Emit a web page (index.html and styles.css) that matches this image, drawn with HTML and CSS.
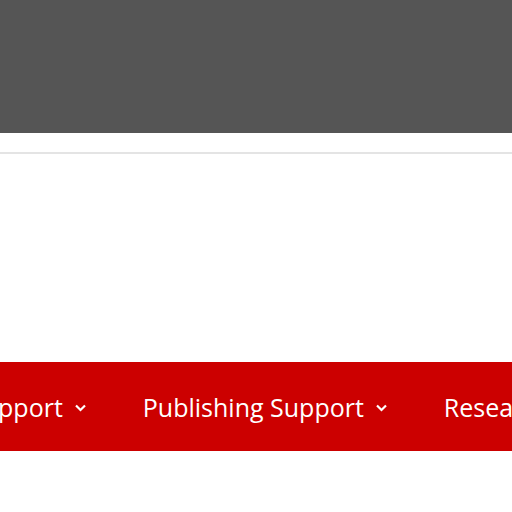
FILE: index.html
```html
<!DOCTYPE html>
<html>
<head>
<meta charset="utf-8">
<link rel="stylesheet" href="styles.css">
</head>
<body>
<div class="topbar"></div>
<div class="header">
  <div class="rule"></div>
</div>
<nav class="mainnav">
  <ul class="menu">
    <li class="item">Support <svg class="chev" viewBox="0 0 13 8" width="13" height="8"><path d="M2 1.5 L6.5 6 L11 1.5" fill="none" stroke="#fff" stroke-width="2.2"/></svg></li>
    <li class="item">Publishing Support <svg class="chev" viewBox="0 0 13 8" width="13" height="8"><path d="M2 1.5 L6.5 6 L11 1.5" fill="none" stroke="#fff" stroke-width="2.2"/></svg></li>
    <li class="item">Research Support <svg class="chev" viewBox="0 0 13 8" width="13" height="8"><path d="M2 1.5 L6.5 6 L11 1.5" fill="none" stroke="#fff" stroke-width="2.2"/></svg></li>
  </ul>
</nav>
</body>
</html>
```
FILE: styles.css
```css
html, body {
  margin: 0;
  padding: 0;
  background: #ffffff;
  overflow: hidden;
  width: 512px;
  height: 512px;
}
.topbar {
  height: 133px;
  background: #555555;
}
.header {
  height: 229px;
  padding-top: 19px;
  box-sizing: border-box;
}
.rule {
  height: 2px;
  background: #e4e4e4;
}
.mainnav {
  height: 89px;
  background: #cc0000;
  overflow: hidden;
}
.menu {
  list-style: none;
  margin: 0 0 0 -31px;
  padding: 0;
  display: flex;
  align-items: center;
  height: 100%;
  white-space: nowrap;
}
.item {
  display: flex;
  align-items: center;
  gap: 11px;
  margin-right: 56px;
  color: #ffffff;
  font-family: "Open Sans", sans-serif;
  font-size: 25px;
  font-weight: 500;
  flex: none;
}
.chev {
  display: block;
  margin-top: 2px;
}
```
